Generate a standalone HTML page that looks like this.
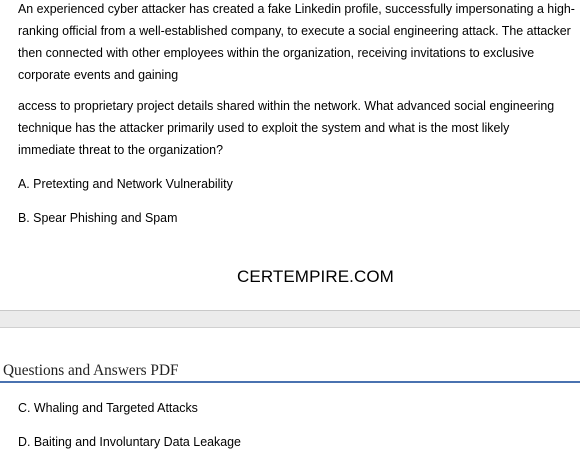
<html><head><style>
body{margin:0;width:580px;height:462px;background:#fff;position:relative;overflow:hidden;font-family:"Liberation Sans",sans-serif;color:#000}
.l{position:absolute;left:18px;font-size:13px;white-space:nowrap;transform-origin:0 50%;transform:scaleX(0.955);line-height:16px}
</style></head><body>
<div class="l" style="top:1px">An experienced cyber attacker has created a fake Linkedin profile, successfully impersonating a high-</div>
<div class="l" style="top:23px">ranking official from a well-established company, to execute a social engineering attack. The attacker</div>
<div class="l" style="top:45px">then connected with other employees within the organization, receiving invitations to exclusive</div>
<div class="l" style="top:67px">corporate events and gaining</div>
<div class="l" style="top:98px">access to proprietary project details shared within the network. What advanced social engineering</div>
<div class="l" style="top:120px">technique has the attacker primarily used to exploit the system and what is the most likely</div>
<div class="l" style="top:142px">immediate threat to the organization?</div>
<div class="l" style="top:176px">A. Pretexting and Network Vulnerability</div>
<div class="l" style="top:210px">B. Spear Phishing and Spam</div>
<div style="position:absolute;left:237px;top:267px;font-size:17px;letter-spacing:0.1px">CERTEMPIRE.COM</div>
<div style="position:absolute;left:0;top:310px;width:580px;height:16px;background:#ebebeb;border-top:1px solid #c8c8c8;border-bottom:1px solid #d0d0d0"></div>
<div style="position:absolute;left:3px;top:362px;font-family:'Liberation Serif',serif;font-size:15.3px;color:#222">Questions and Answers PDF</div>
<div style="position:absolute;left:0;top:381px;width:580px;height:2px;background:#4a72b0"></div>
<div class="l" style="top:400px">C. Whaling and Targeted Attacks</div>
<div class="l" style="top:434px">D. Baiting and Involuntary Data Leakage</div>
</body></html>
